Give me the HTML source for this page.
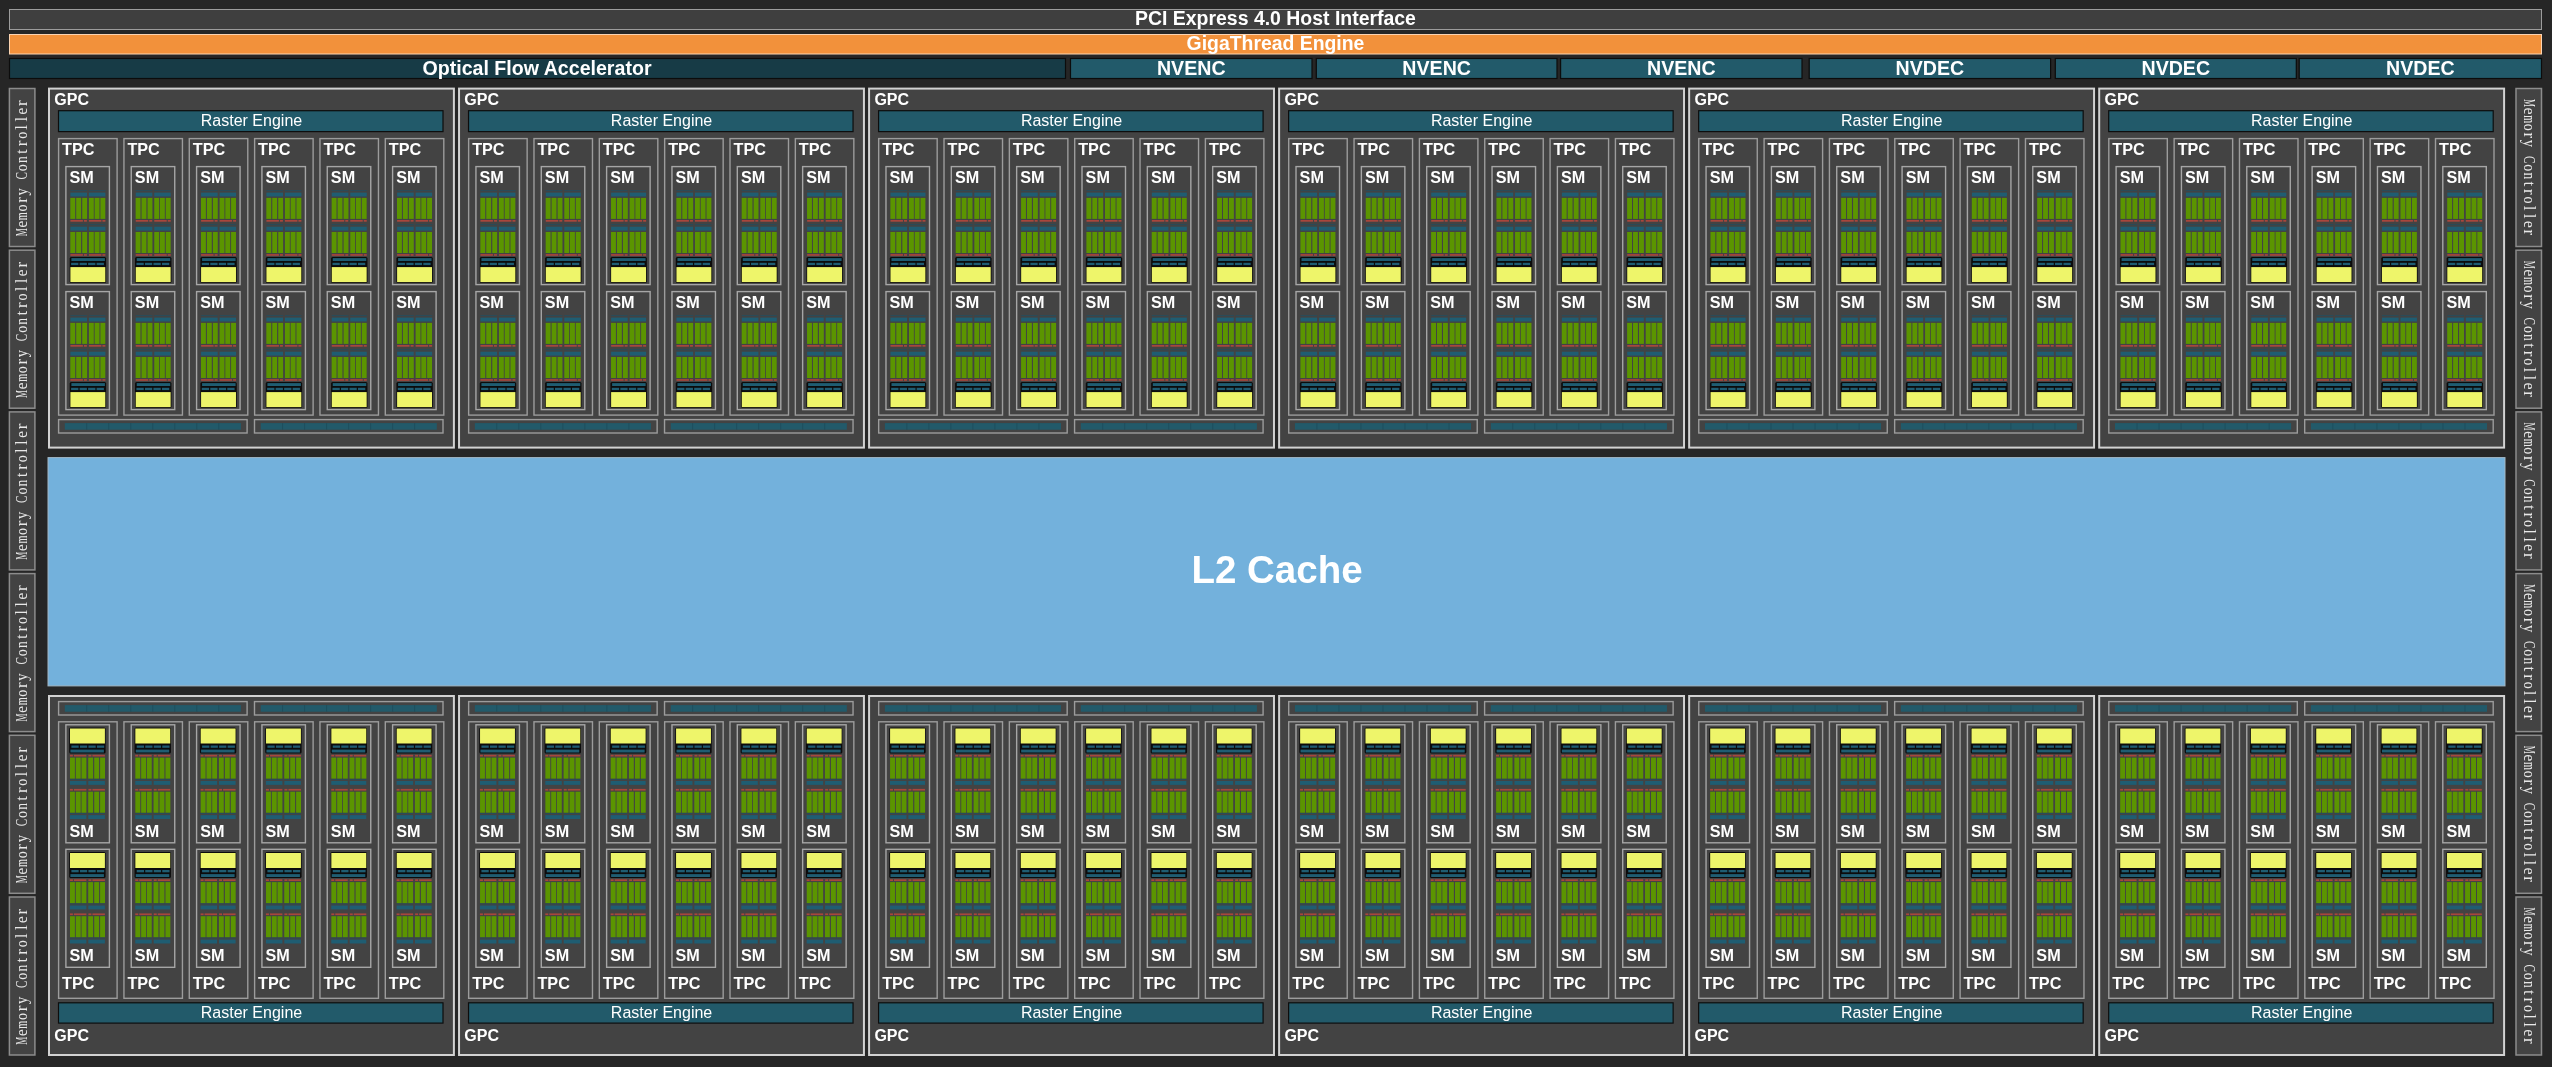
<!DOCTYPE html>
<html><head><meta charset="utf-8"><style>
html,body{margin:0;padding:0;background:#262626;overflow:hidden;}
svg{display:block;will-change:transform;}
</style></head><body>
<svg width="2552" height="1067" viewBox="0 0 2552 1067">
<defs><g id="smc"><rect x="4.5" y="23.4" width="16.6" height="1.1" fill="#2a4b58"/><rect x="23" y="23.4" width="16.5" height="1.1" fill="#2a4b58"/><rect x="4.5" y="26" width="16.6" height="3.9" fill="#1f5d72"/><rect x="23" y="26" width="16.5" height="3.9" fill="#1f5d72"/><rect x="4.4" y="31.3" width="4.9" height="21" fill="#5b9500"/><rect x="10.3" y="31.3" width="4.9" height="21" fill="#5b9500"/><rect x="16.3" y="31.3" width="4.9" height="21" fill="#5b9500"/><rect x="23.0" y="31.3" width="4.9" height="21" fill="#5b9500"/><rect x="28.7" y="31.3" width="4.9" height="21" fill="#5b9500"/><rect x="34.5" y="31.3" width="4.9" height="21" fill="#5b9500"/><rect x="4.5" y="53.4" width="12.5" height="1.7" fill="#a8463c"/><rect x="18" y="53.4" width="3" height="1.7" fill="#a8463c"/><rect x="23" y="53.4" width="12.5" height="1.7" fill="#a8463c"/><rect x="36.5" y="53.4" width="3" height="1.7" fill="#a8463c"/><rect x="4.5" y="57.5" width="16.6" height="1.1" fill="#2a4b58"/><rect x="23" y="57.5" width="16.5" height="1.1" fill="#2a4b58"/><rect x="4.5" y="60.1" width="16.6" height="3.9" fill="#1f5d72"/><rect x="23" y="60.1" width="16.5" height="3.9" fill="#1f5d72"/><rect x="4.4" y="65.4" width="4.9" height="21" fill="#5b9500"/><rect x="10.3" y="65.4" width="4.9" height="21" fill="#5b9500"/><rect x="16.3" y="65.4" width="4.9" height="21" fill="#5b9500"/><rect x="23.0" y="65.4" width="4.9" height="21" fill="#5b9500"/><rect x="28.7" y="65.4" width="4.9" height="21" fill="#5b9500"/><rect x="34.5" y="65.4" width="4.9" height="21" fill="#5b9500"/><rect x="4.5" y="87.5" width="12.5" height="1.7" fill="#a8463c"/><rect x="18" y="87.5" width="3" height="1.7" fill="#a8463c"/><rect x="23" y="87.5" width="12.5" height="1.7" fill="#a8463c"/><rect x="36.5" y="87.5" width="3" height="1.7" fill="#a8463c"/><rect x="3.8" y="90.5" width="36.4" height="26" rx="1.5" fill="#0c0c0c"/><rect x="5.5" y="91.5" width="33.5" height="2.9" fill="#1f5d72"/><rect x="5.2" y="96.2" width="7.3" height="2.3" fill="#1f5d72"/><rect x="13.7" y="96.2" width="7.3" height="2.3" fill="#1f5d72"/><rect x="22.2" y="96.2" width="7.3" height="2.3" fill="#1f5d72"/><rect x="30.7" y="96.2" width="7.3" height="2.3" fill="#1f5d72"/><rect x="4.5" y="100.5" width="34.9" height="15" fill="#eef56a"/></g><g id="smc2"><rect x="4.5" y="30.0" width="16.6" height="1.1" fill="#2a4b58"/><rect x="23" y="30.0" width="16.5" height="1.1" fill="#2a4b58"/><rect x="4.5" y="25.0" width="16.6" height="3.9" fill="#1f5d72"/><rect x="23" y="25.0" width="16.5" height="3.9" fill="#1f5d72"/><rect x="4.4" y="31.3" width="4.9" height="21" fill="#5b9500"/><rect x="10.3" y="31.3" width="4.9" height="21" fill="#5b9500"/><rect x="16.3" y="31.3" width="4.9" height="21" fill="#5b9500"/><rect x="23.0" y="31.3" width="4.9" height="21" fill="#5b9500"/><rect x="28.7" y="31.3" width="4.9" height="21" fill="#5b9500"/><rect x="34.5" y="31.3" width="4.9" height="21" fill="#5b9500"/><rect x="4.5" y="53.4" width="12.5" height="1.7" fill="#a8463c"/><rect x="18" y="53.4" width="3" height="1.7" fill="#a8463c"/><rect x="23" y="53.4" width="12.5" height="1.7" fill="#a8463c"/><rect x="36.5" y="53.4" width="3" height="1.7" fill="#a8463c"/><rect x="4.5" y="64.1" width="16.6" height="1.1" fill="#2a4b58"/><rect x="23" y="64.1" width="16.5" height="1.1" fill="#2a4b58"/><rect x="4.5" y="59.1" width="16.6" height="3.9" fill="#1f5d72"/><rect x="23" y="59.1" width="16.5" height="3.9" fill="#1f5d72"/><rect x="4.4" y="65.4" width="4.9" height="21" fill="#5b9500"/><rect x="10.3" y="65.4" width="4.9" height="21" fill="#5b9500"/><rect x="16.3" y="65.4" width="4.9" height="21" fill="#5b9500"/><rect x="23.0" y="65.4" width="4.9" height="21" fill="#5b9500"/><rect x="28.7" y="65.4" width="4.9" height="21" fill="#5b9500"/><rect x="34.5" y="65.4" width="4.9" height="21" fill="#5b9500"/><rect x="4.5" y="87.5" width="12.5" height="1.7" fill="#a8463c"/><rect x="18" y="87.5" width="3" height="1.7" fill="#a8463c"/><rect x="23" y="87.5" width="12.5" height="1.7" fill="#a8463c"/><rect x="36.5" y="87.5" width="3" height="1.7" fill="#a8463c"/><rect x="3.8" y="90.5" width="36.4" height="26" rx="1.5" fill="#0c0c0c"/><rect x="5.5" y="91.5" width="33.5" height="2.9" fill="#1f5d72"/><rect x="5.2" y="96.2" width="7.3" height="2.3" fill="#1f5d72"/><rect x="13.7" y="96.2" width="7.3" height="2.3" fill="#1f5d72"/><rect x="22.2" y="96.2" width="7.3" height="2.3" fill="#1f5d72"/><rect x="30.7" y="96.2" width="7.3" height="2.3" fill="#1f5d72"/><rect x="4.5" y="100.5" width="34.9" height="15" fill="#eef56a"/></g><g id="smT"><rect x="0" y="0" width="43.5" height="118" fill="#434343" stroke="#a6a6a6" stroke-width="1.4"/><use href="#smc"/><text x="3.6" y="16.3" font-family='"Liberation Sans", sans-serif' font-size="16.2" font-weight="bold" fill="#ffffff" text-anchor="start">SM</text></g><g id="smB"><rect x="0" y="0" width="43.5" height="118" fill="#434343" stroke="#a6a6a6" stroke-width="1.4"/><use href="#smc2" transform="translate(43.5 119.2) scale(-1 -1)"/><text x="3.6" y="111.8" font-family='"Liberation Sans", sans-serif' font-size="16.2" font-weight="bold" fill="#ffffff" text-anchor="start">SM</text></g><g id="tpcT"><rect x="0" y="0" width="58.5" height="276.5" fill="#434343" stroke="#9c9c9c" stroke-width="1.4"/><text x="3.5" y="16.4" font-family='"Liberation Sans", sans-serif' font-size="16.2" font-weight="bold" fill="#ffffff" text-anchor="start">TPC</text><use href="#smT" x="7.3" y="28"/><use href="#smT" x="7.3" y="153"/></g><g id="tpcB"><rect x="0" y="0" width="58.5" height="276.5" fill="#434343" stroke="#9c9c9c" stroke-width="1.4"/><text x="3.5" y="267.6" font-family='"Liberation Sans", sans-serif' font-size="16.2" font-weight="bold" fill="#ffffff" text-anchor="start">TPC</text><use href="#smB" x="7.3" y="3"/><use href="#smB" x="7.3" y="127.5"/></g><g id="gpcT"><rect x="0" y="0" width="404.9" height="359" fill="#434343" stroke="#d2d2d2" stroke-width="2"/><text x="5.3" y="16.2" font-family='"Liberation Sans", sans-serif' font-size="16" font-weight="bold" fill="#ffffff" text-anchor="start">GPC</text><rect x="9.5" y="22.1" width="384.5" height="20.9" fill="#225a6a" stroke="#0d0d0d" stroke-width="1.2"/><text x="202.5" y="37.1" font-family='"Liberation Sans", sans-serif' font-size="16" font-weight="normal" fill="#ffffff" text-anchor="middle">Raster Engine</text><use href="#tpcT" x="9.60" y="50"/><use href="#tpcT" x="74.94" y="50"/><use href="#tpcT" x="140.28" y="50"/><use href="#tpcT" x="205.62" y="50"/><use href="#tpcT" x="270.96" y="50"/><use href="#tpcT" x="336.30" y="50"/><rect x="9.6" y="331" width="188.5" height="13.4" fill="#434343" stroke="#9c9c9c" stroke-width="1.4"/><rect x="15.8" y="334.5" width="176.1" height="6.6" fill="#225a6a"/><rect x="37.5125" y="334.5" width="0.6" height="6.6" fill="#1c4756"/><rect x="59.525000000000006" y="334.5" width="0.6" height="6.6" fill="#1c4756"/><rect x="81.5375" y="334.5" width="0.6" height="6.6" fill="#1c4756"/><rect x="103.55" y="334.5" width="0.6" height="6.6" fill="#1c4756"/><rect x="125.5625" y="334.5" width="0.6" height="6.6" fill="#1c4756"/><rect x="147.575" y="334.5" width="0.6" height="6.6" fill="#1c4756"/><rect x="169.5875" y="334.5" width="0.6" height="6.6" fill="#1c4756"/><rect x="205.5" y="331" width="188.5" height="13.4" fill="#434343" stroke="#9c9c9c" stroke-width="1.4"/><rect x="211.7" y="334.5" width="176.1" height="6.6" fill="#225a6a"/><rect x="233.41249999999997" y="334.5" width="0.6" height="6.6" fill="#1c4756"/><rect x="255.42499999999998" y="334.5" width="0.6" height="6.6" fill="#1c4756"/><rect x="277.43749999999994" y="334.5" width="0.6" height="6.6" fill="#1c4756"/><rect x="299.45" y="334.5" width="0.6" height="6.6" fill="#1c4756"/><rect x="321.4625" y="334.5" width="0.6" height="6.6" fill="#1c4756"/><rect x="343.47499999999997" y="334.5" width="0.6" height="6.6" fill="#1c4756"/><rect x="365.4875" y="334.5" width="0.6" height="6.6" fill="#1c4756"/></g><g id="gpcB"><rect x="0" y="0" width="404.9" height="359" fill="#434343" stroke="#d2d2d2" stroke-width="2"/><rect x="9.6" y="5.6" width="188.5" height="13.4" fill="#434343" stroke="#9c9c9c" stroke-width="1.4"/><rect x="15.8" y="9.1" width="176.1" height="6.6" fill="#225a6a"/><rect x="37.5125" y="9.1" width="0.6" height="6.6" fill="#1c4756"/><rect x="59.525000000000006" y="9.1" width="0.6" height="6.6" fill="#1c4756"/><rect x="81.5375" y="9.1" width="0.6" height="6.6" fill="#1c4756"/><rect x="103.55" y="9.1" width="0.6" height="6.6" fill="#1c4756"/><rect x="125.5625" y="9.1" width="0.6" height="6.6" fill="#1c4756"/><rect x="147.575" y="9.1" width="0.6" height="6.6" fill="#1c4756"/><rect x="169.5875" y="9.1" width="0.6" height="6.6" fill="#1c4756"/><rect x="205.5" y="5.6" width="188.5" height="13.4" fill="#434343" stroke="#9c9c9c" stroke-width="1.4"/><rect x="211.7" y="9.1" width="176.1" height="6.6" fill="#225a6a"/><rect x="233.41249999999997" y="9.1" width="0.6" height="6.6" fill="#1c4756"/><rect x="255.42499999999998" y="9.1" width="0.6" height="6.6" fill="#1c4756"/><rect x="277.43749999999994" y="9.1" width="0.6" height="6.6" fill="#1c4756"/><rect x="299.45" y="9.1" width="0.6" height="6.6" fill="#1c4756"/><rect x="321.4625" y="9.1" width="0.6" height="6.6" fill="#1c4756"/><rect x="343.47499999999997" y="9.1" width="0.6" height="6.6" fill="#1c4756"/><rect x="365.4875" y="9.1" width="0.6" height="6.6" fill="#1c4756"/><use href="#tpcB" x="9.60" y="25.8"/><use href="#tpcB" x="74.94" y="25.8"/><use href="#tpcB" x="140.28" y="25.8"/><use href="#tpcB" x="205.62" y="25.8"/><use href="#tpcB" x="270.96" y="25.8"/><use href="#tpcB" x="336.30" y="25.8"/><rect x="9.5" y="306.8" width="384.5" height="20.3" fill="#225a6a" stroke="#0d0d0d" stroke-width="1.2"/><text x="202.5" y="321.5" font-family='"Liberation Sans", sans-serif' font-size="16" font-weight="normal" fill="#ffffff" text-anchor="middle">Raster Engine</text><text x="5.3" y="344.6" font-family='"Liberation Sans", sans-serif' font-size="16" font-weight="bold" fill="#ffffff" text-anchor="start">GPC</text></g><g id="mct" font-family='"Liberation Serif", serif' font-size="17" fill="#e8e8e8"><text transform="translate(-64.64 0) scale(0.53 1)" text-anchor="middle">M</text><text transform="translate(-56.56 0) scale(0.95 1)" text-anchor="middle">e</text><text transform="translate(-48.48 0) scale(0.6 1)" text-anchor="middle">m</text><text transform="translate(-40.40 0) scale(0.82 1)" text-anchor="middle">o</text><text transform="translate(-32.32 0) scale(1.0 1)" text-anchor="middle">r</text><text transform="translate(-24.24 0) scale(0.85 1)" text-anchor="middle">y</text><text transform="translate(-8.08 0) scale(0.66 1)" text-anchor="middle">C</text><text transform="translate(0.00 0) scale(0.82 1)" text-anchor="middle">o</text><text transform="translate(8.08 0) scale(0.8 1)" text-anchor="middle">n</text><text transform="translate(16.16 0) scale(1.0 1)" text-anchor="middle">t</text><text transform="translate(24.24 0) scale(1.0 1)" text-anchor="middle">r</text><text transform="translate(32.32 0) scale(0.82 1)" text-anchor="middle">o</text><text transform="translate(40.40 0) scale(1.0 1)" text-anchor="middle">l</text><text transform="translate(48.48 0) scale(1.0 1)" text-anchor="middle">l</text><text transform="translate(56.56 0) scale(0.95 1)" text-anchor="middle">e</text><text transform="translate(64.64 0) scale(1.0 1)" text-anchor="middle">r</text></g><g id="mcL"><rect x="0" y="0" width="25.5" height="158" fill="#434343" stroke="#8c8c8c" stroke-width="1.5"/><use href="#mct" transform="translate(17.7 79.2) rotate(-90)"/></g><g id="mcR"><rect x="0" y="0" width="25.5" height="158" fill="#434343" stroke="#8c8c8c" stroke-width="1.5"/><use href="#mct" transform="translate(7.6 79.2) rotate(90)"/></g></defs>
<rect x="0" y="0" width="2552" height="1067" fill="#262626"/>
<rect x="9.5" y="9.5" width="2532" height="20" fill="#3f3f3f" stroke="#9c9c9c" stroke-width="1"/>
<text x="1275.5" y="25" font-family='"Liberation Sans", sans-serif' font-size="19.45" font-weight="bold" fill="#ffffff" text-anchor="middle">PCI Express 4.0 Host Interface</text>
<rect x="9.5" y="34.5" width="2532" height="19.5" fill="#f2913b" stroke="#fbd4b2" stroke-width="1"/>
<text x="1275.5" y="49.5" font-family='"Liberation Sans", sans-serif' font-size="19.4" font-weight="bold" fill="#ffffff" text-anchor="middle">GigaThread Engine</text>
<rect x="9.5" y="58.5" width="1056" height="20" fill="#173b46" stroke="#0c0c0c" stroke-width="1.2"/>
<text x="537" y="74.7" font-family='"Liberation Sans", sans-serif' font-size="19.6" font-weight="bold" fill="#ffffff" text-anchor="middle">Optical Flow Accelerator</text>
<rect x="1070.5" y="58.5" width="241.5" height="20" fill="#225a6a" stroke="#0c0c0c" stroke-width="1.2"/>
<text x="1191.25" y="74.7" font-family='"Liberation Sans", sans-serif' font-size="19.6" font-weight="bold" fill="#ffffff" text-anchor="middle">NVENC</text>
<rect x="1316.3" y="58.5" width="240.7" height="20" fill="#225a6a" stroke="#0c0c0c" stroke-width="1.2"/>
<text x="1436.65" y="74.7" font-family='"Liberation Sans", sans-serif' font-size="19.6" font-weight="bold" fill="#ffffff" text-anchor="middle">NVENC</text>
<rect x="1560.6" y="58.5" width="241.4" height="20" fill="#225a6a" stroke="#0c0c0c" stroke-width="1.2"/>
<text x="1681.3" y="74.7" font-family='"Liberation Sans", sans-serif' font-size="19.6" font-weight="bold" fill="#ffffff" text-anchor="middle">NVENC</text>
<rect x="1809.2" y="58.5" width="241.4" height="20" fill="#225a6a" stroke="#0c0c0c" stroke-width="1.2"/>
<text x="1929.9" y="74.7" font-family='"Liberation Sans", sans-serif' font-size="19.6" font-weight="bold" fill="#ffffff" text-anchor="middle">NVDEC</text>
<rect x="2055.3" y="58.5" width="241.0" height="20" fill="#225a6a" stroke="#0c0c0c" stroke-width="1.2"/>
<text x="2175.8" y="74.7" font-family='"Liberation Sans", sans-serif' font-size="19.6" font-weight="bold" fill="#ffffff" text-anchor="middle">NVDEC</text>
<rect x="2299.2" y="58.5" width="242.3" height="20" fill="#225a6a" stroke="#0c0c0c" stroke-width="1.2"/>
<text x="2420.35" y="74.7" font-family='"Liberation Sans", sans-serif' font-size="19.6" font-weight="bold" fill="#ffffff" text-anchor="middle">NVDEC</text>
<use href="#mcL" x="9.4" y="88.5"/>
<use href="#mcR" x="2516" y="88.5"/>
<use href="#mcL" x="9.4" y="250.2"/>
<use href="#mcR" x="2516" y="250.2"/>
<use href="#mcL" x="9.4" y="411.9"/>
<use href="#mcR" x="2516" y="411.9"/>
<use href="#mcL" x="9.4" y="573.6"/>
<use href="#mcR" x="2516" y="573.6"/>
<use href="#mcL" x="9.4" y="735.3"/>
<use href="#mcR" x="2516" y="735.3"/>
<use href="#mcL" x="9.4" y="897.0"/>
<use href="#mcR" x="2516" y="897.0"/>
<use href="#gpcT" x="49.00" y="88.6"/>
<use href="#gpcB" x="49.00" y="696"/>
<use href="#gpcT" x="459.04" y="88.6"/>
<use href="#gpcB" x="459.04" y="696"/>
<use href="#gpcT" x="869.08" y="88.6"/>
<use href="#gpcB" x="869.08" y="696"/>
<use href="#gpcT" x="1279.12" y="88.6"/>
<use href="#gpcB" x="1279.12" y="696"/>
<use href="#gpcT" x="1689.16" y="88.6"/>
<use href="#gpcB" x="1689.16" y="696"/>
<use href="#gpcT" x="2099.20" y="88.6"/>
<use href="#gpcB" x="2099.20" y="696"/>
<rect x="48" y="457.6" width="2457" height="228.3" fill="#73b1dc" stroke="#a3b8c6" stroke-width="1"/>
<text x="1277" y="583.4" font-family='"Liberation Sans", sans-serif' font-size="38.5" font-weight="bold" fill="#ffffff" text-anchor="middle">L2 Cache</text>
</svg>
</body></html>
